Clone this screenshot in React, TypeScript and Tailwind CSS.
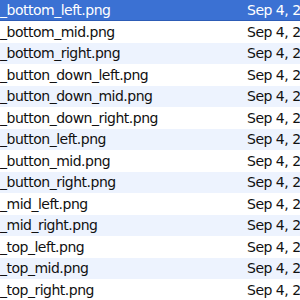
const files = [
  '_bottom_left.png',
  '_bottom_mid.png',
  '_bottom_right.png',
  '_button_down_left.png',
  '_button_down_mid.png',
  '_button_down_right.png',
  '_button_left.png',
  '_button_mid.png',
  '_button_right.png',
  '_mid_left.png',
  '_mid_right.png',
  '_top_left.png',
  '_top_mid.png',
  '_top_right.png',
];

export default function App() {
  return (
    <div className="w-[300px] h-[300px] overflow-hidden bg-white font-['DejaVu_Sans',sans-serif] text-[14px] tracking-[-0.5px] text-[#111]">
      {files.map((name, i) => {
        const selected = i === 0;
        const stripe = i % 2 === 0 ? 'bg-[#edf3fe]' : 'bg-white';
        const height = i % 2 === 0 ? 'h-[21px]' : 'h-[22px]';
        return (
          <div
            key={name}
            className={`flex items-center whitespace-nowrap ${height} ${
              selected ? 'bg-[#3b71d3] text-white border-b border-[#2d5cb6]' : stripe
            }`}
          >
            <span className="w-[247px] shrink-0 overflow-hidden">{name}</span>
            <span className="shrink-0">Sep 4, 2012 10:31 AM</span>
          </div>
        );
      })}
    </div>
  );
}
